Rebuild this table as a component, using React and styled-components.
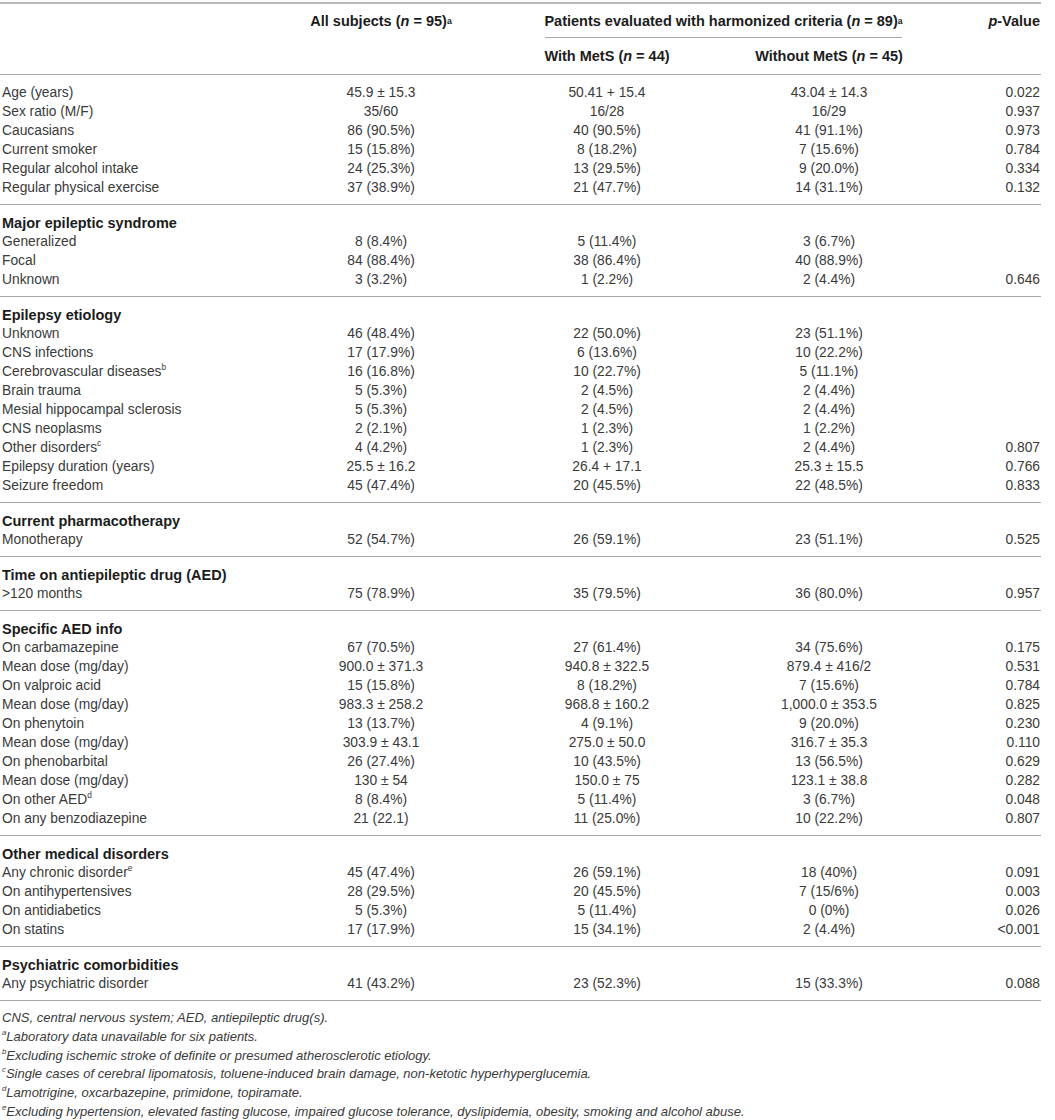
import React from "react";
import styled, { createGlobalStyle } from "styled-components";

const GlobalStyle = createGlobalStyle`
  html, body { margin: 0; padding: 0; background: #fff; }
  body {
    font-family: "Liberation Sans", Arial, Helvetica, sans-serif;
    color: #333;
  }
`;

const COLS = "290px 182px 270px 174px 125px";
const LINE = "#a9a9a9";

const Page = styled.div`
  width: 1041px;
  padding-top: 2px;
`;

const Table = styled.div`
  border-top: 2px solid #b8b8b8;
`;

const Header = styled.div`
  display: grid;
  grid-template-columns: ${COLS};
  grid-template-rows: 34px 36px;
  border-bottom: 1px solid ${LINE};
  font-weight: bold;
  font-size: 14.5px;
  color: #1c1c1c;
`;

const HeadCell = styled.div`
  grid-column: ${(p) => p.$col};
  grid-row: ${(p) => p.$row};
  display: flex;
  align-items: center;
  justify-content: ${(p) => (p.$right ? "flex-end" : "center")};
  padding-right: ${(p) => (p.$right ? "1px" : "0")};
  white-space: nowrap;
`;

const SpanHead = styled.div`
  grid-column: 3 / 5;
  grid-row: 1;
  margin: 0 14px 0 73px;
  border-bottom: 1px solid ${LINE};
  display: flex;
  align-items: center;
  justify-content: center;
  white-space: nowrap;
`;

const Sup = styled.sup`
  font-size: 0.6em;
  line-height: 0;
  vertical-align: 0.75em;
  font-weight: ${(p) => (p.$bold ? "bold" : "normal")};
`;

const Group = styled.div`
  padding: 8px 0 7px;
  border-bottom: 1px solid ${LINE};
`;

const SectionTitle = styled.div`
  height: 19px;
  display: flex;
  align-items: center;
  padding-left: 2px;
  font-weight: bold;
  font-size: 14.5px;
  color: #1c1c1c;
  white-space: nowrap;
`;

const Row = styled.div`
  display: grid;
  grid-template-columns: ${COLS};
  height: 19px;
  align-items: center;
  font-size: 13.8px;
  color: #3a3a3a;
`;

const Label = styled.div`
  padding-left: 2px;
  white-space: nowrap;
`;

const Value = styled.div`
  text-align: center;
  white-space: nowrap;
`;

const PValue = styled.div`
  text-align: right;
  padding-right: 1px;
  white-space: nowrap;
`;

const Notes = styled.div`
  padding: 8px 0 0 2px;
  font-style: italic;
  font-size: 13px;
  line-height: 18.8px;
  color: #3a3a3a;
`;

const Note = styled.div`
  white-space: nowrap;
`;

const groups = [
  {
    title: null,
    rows: [
      ["Age (years)", "45.9 ± 15.3", "50.41 + 15.4", "43.04 ± 14.3", "0.022"],
      ["Sex ratio (M/F)", "35/60", "16/28", "16/29", "0.937"],
      ["Caucasians", "86 (90.5%)", "40 (90.5%)", "41 (91.1%)", "0.973"],
      ["Current smoker", "15 (15.8%)", "8 (18.2%)", "7 (15.6%)", "0.784"],
      ["Regular alcohol intake", "24 (25.3%)", "13 (29.5%)", "9 (20.0%)", "0.334"],
      ["Regular physical exercise", "37 (38.9%)", "21 (47.7%)", "14 (31.1%)", "0.132"],
    ],
  },
  {
    title: "Major epileptic syndrome",
    rows: [
      ["Generalized", "8 (8.4%)", "5 (11.4%)", "3 (6.7%)", ""],
      ["Focal", "84 (88.4%)", "38 (86.4%)", "40 (88.9%)", ""],
      ["Unknown", "3 (3.2%)", "1 (2.2%)", "2 (4.4%)", "0.646"],
    ],
  },
  {
    title: "Epilepsy etiology",
    rows: [
      ["Unknown", "46 (48.4%)", "22 (50.0%)", "23 (51.1%)", ""],
      ["CNS infections", "17 (17.9%)", "6 (13.6%)", "10 (22.2%)", ""],
      ["Cerebrovascular diseases", "16 (16.8%)", "10 (22.7%)", "5 (11.1%)", "", "b"],
      ["Brain trauma", "5 (5.3%)", "2 (4.5%)", "2 (4.4%)", ""],
      ["Mesial hippocampal sclerosis", "5 (5.3%)", "2 (4.5%)", "2 (4.4%)", ""],
      ["CNS neoplasms", "2 (2.1%)", "1 (2.3%)", "1 (2.2%)", ""],
      ["Other disorders", "4 (4.2%)", "1 (2.3%)", "2 (4.4%)", "0.807", "c"],
      ["Epilepsy duration (years)", "25.5 ± 16.2", "26.4 + 17.1", "25.3 ± 15.5", "0.766"],
      ["Seizure freedom", "45 (47.4%)", "20 (45.5%)", "22 (48.5%)", "0.833"],
    ],
  },
  {
    title: "Current pharmacotherapy",
    rows: [["Monotherapy", "52 (54.7%)", "26 (59.1%)", "23 (51.1%)", "0.525"]],
  },
  {
    title: "Time on antiepileptic drug (AED)",
    rows: [[">120 months", "75 (78.9%)", "35 (79.5%)", "36 (80.0%)", "0.957"]],
  },
  {
    title: "Specific AED info",
    rows: [
      ["On carbamazepine", "67 (70.5%)", "27 (61.4%)", "34 (75.6%)", "0.175"],
      ["Mean dose (mg/day)", "900.0 ± 371.3", "940.8 ± 322.5", "879.4 ± 416/2", "0.531"],
      ["On valproic acid", "15 (15.8%)", "8 (18.2%)", "7 (15.6%)", "0.784"],
      ["Mean dose (mg/day)", "983.3 ± 258.2", "968.8 ± 160.2", "1,000.0 ± 353.5", "0.825"],
      ["On phenytoin", "13 (13.7%)", "4 (9.1%)", "9 (20.0%)", "0.230"],
      ["Mean dose (mg/day)", "303.9 ± 43.1", "275.0 ± 50.0", "316.7 ± 35.3", "0.110"],
      ["On phenobarbital", "26 (27.4%)", "10 (43.5%)", "13 (56.5%)", "0.629"],
      ["Mean dose (mg/day)", "130 ± 54", "150.0 ± 75", "123.1 ± 38.8", "0.282"],
      ["On other AED", "8 (8.4%)", "5 (11.4%)", "3 (6.7%)", "0.048", "d"],
      ["On any benzodiazepine", "21 (22.1)", "11 (25.0%)", "10 (22.2%)", "0.807"],
    ],
  },
  {
    title: "Other medical disorders",
    rows: [
      ["Any chronic disorder", "45 (47.4%)", "26 (59.1%)", "18 (40%)", "0.091", "e"],
      ["On antihypertensives", "28 (29.5%)", "20 (45.5%)", "7 (15/6%)", "0.003"],
      ["On antidiabetics", "5 (5.3%)", "5 (11.4%)", "0 (0%)", "0.026"],
      ["On statins", "17 (17.9%)", "15 (34.1%)", "2 (4.4%)", "<0.001"],
    ],
  },
  {
    title: "Psychiatric comorbidities",
    rows: [["Any psychiatric disorder", "41 (43.2%)", "23 (52.3%)", "15 (33.3%)", "0.088"]],
  },
];

const notes = [
  [null, "CNS, central nervous system; AED, antiepileptic drug(s)."],
  ["a", "Laboratory data unavailable for six patients."],
  ["b", "Excluding ischemic stroke of definite or presumed atherosclerotic etiology."],
  ["c", "Single cases of cerebral lipomatosis, toluene-induced brain damage, non-ketotic hyperhyperglucemia."],
  ["d", "Lamotrigine, oxcarbazepine, primidone, topiramate."],
  ["e", "Excluding hypertension, elevated fasting glucose, impaired glucose tolerance, dyslipidemia, obesity, smoking and alcohol abuse."],
];

export default function App() {
  return (
    <Page>
      <GlobalStyle />
      <Table>
        <Header>
          <HeadCell $col={2} $row={1}>
            All subjects (<i>n</i>&nbsp;=&nbsp;95)<Sup $bold>a</Sup>
          </HeadCell>
          <SpanHead>
            Patients evaluated with harmonized criteria (<i>n</i>&nbsp;=&nbsp;89)<Sup $bold>a</Sup>
          </SpanHead>
          <HeadCell $col={5} $row={1} $right>
            <i>p</i>-Value
          </HeadCell>
          <HeadCell $col={3} $row={2}>
            With MetS (<i>n</i>&nbsp;=&nbsp;44)
          </HeadCell>
          <HeadCell $col={4} $row={2}>
            Without MetS (<i>n</i>&nbsp;=&nbsp;45)
          </HeadCell>
        </Header>
        {groups.map((g, gi) => (
          <Group key={gi}>
            {g.title && <SectionTitle>{g.title}</SectionTitle>}
            {g.rows.map((r, ri) => (
              <Row key={ri}>
                <Label>
                  {r[0]}
                  {r[5] && <Sup>{r[5]}</Sup>}
                </Label>
                <Value>{r[1]}</Value>
                <Value>{r[2]}</Value>
                <Value>{r[3]}</Value>
                <PValue>{r[4]}</PValue>
              </Row>
            ))}
          </Group>
        ))}
      </Table>
      <Notes>
        {notes.map(([m, t], i) => (
          <Note key={i}>
            {m && <Sup>{m}</Sup>}
            {t}
          </Note>
        ))}
      </Notes>
    </Page>
  );
}
